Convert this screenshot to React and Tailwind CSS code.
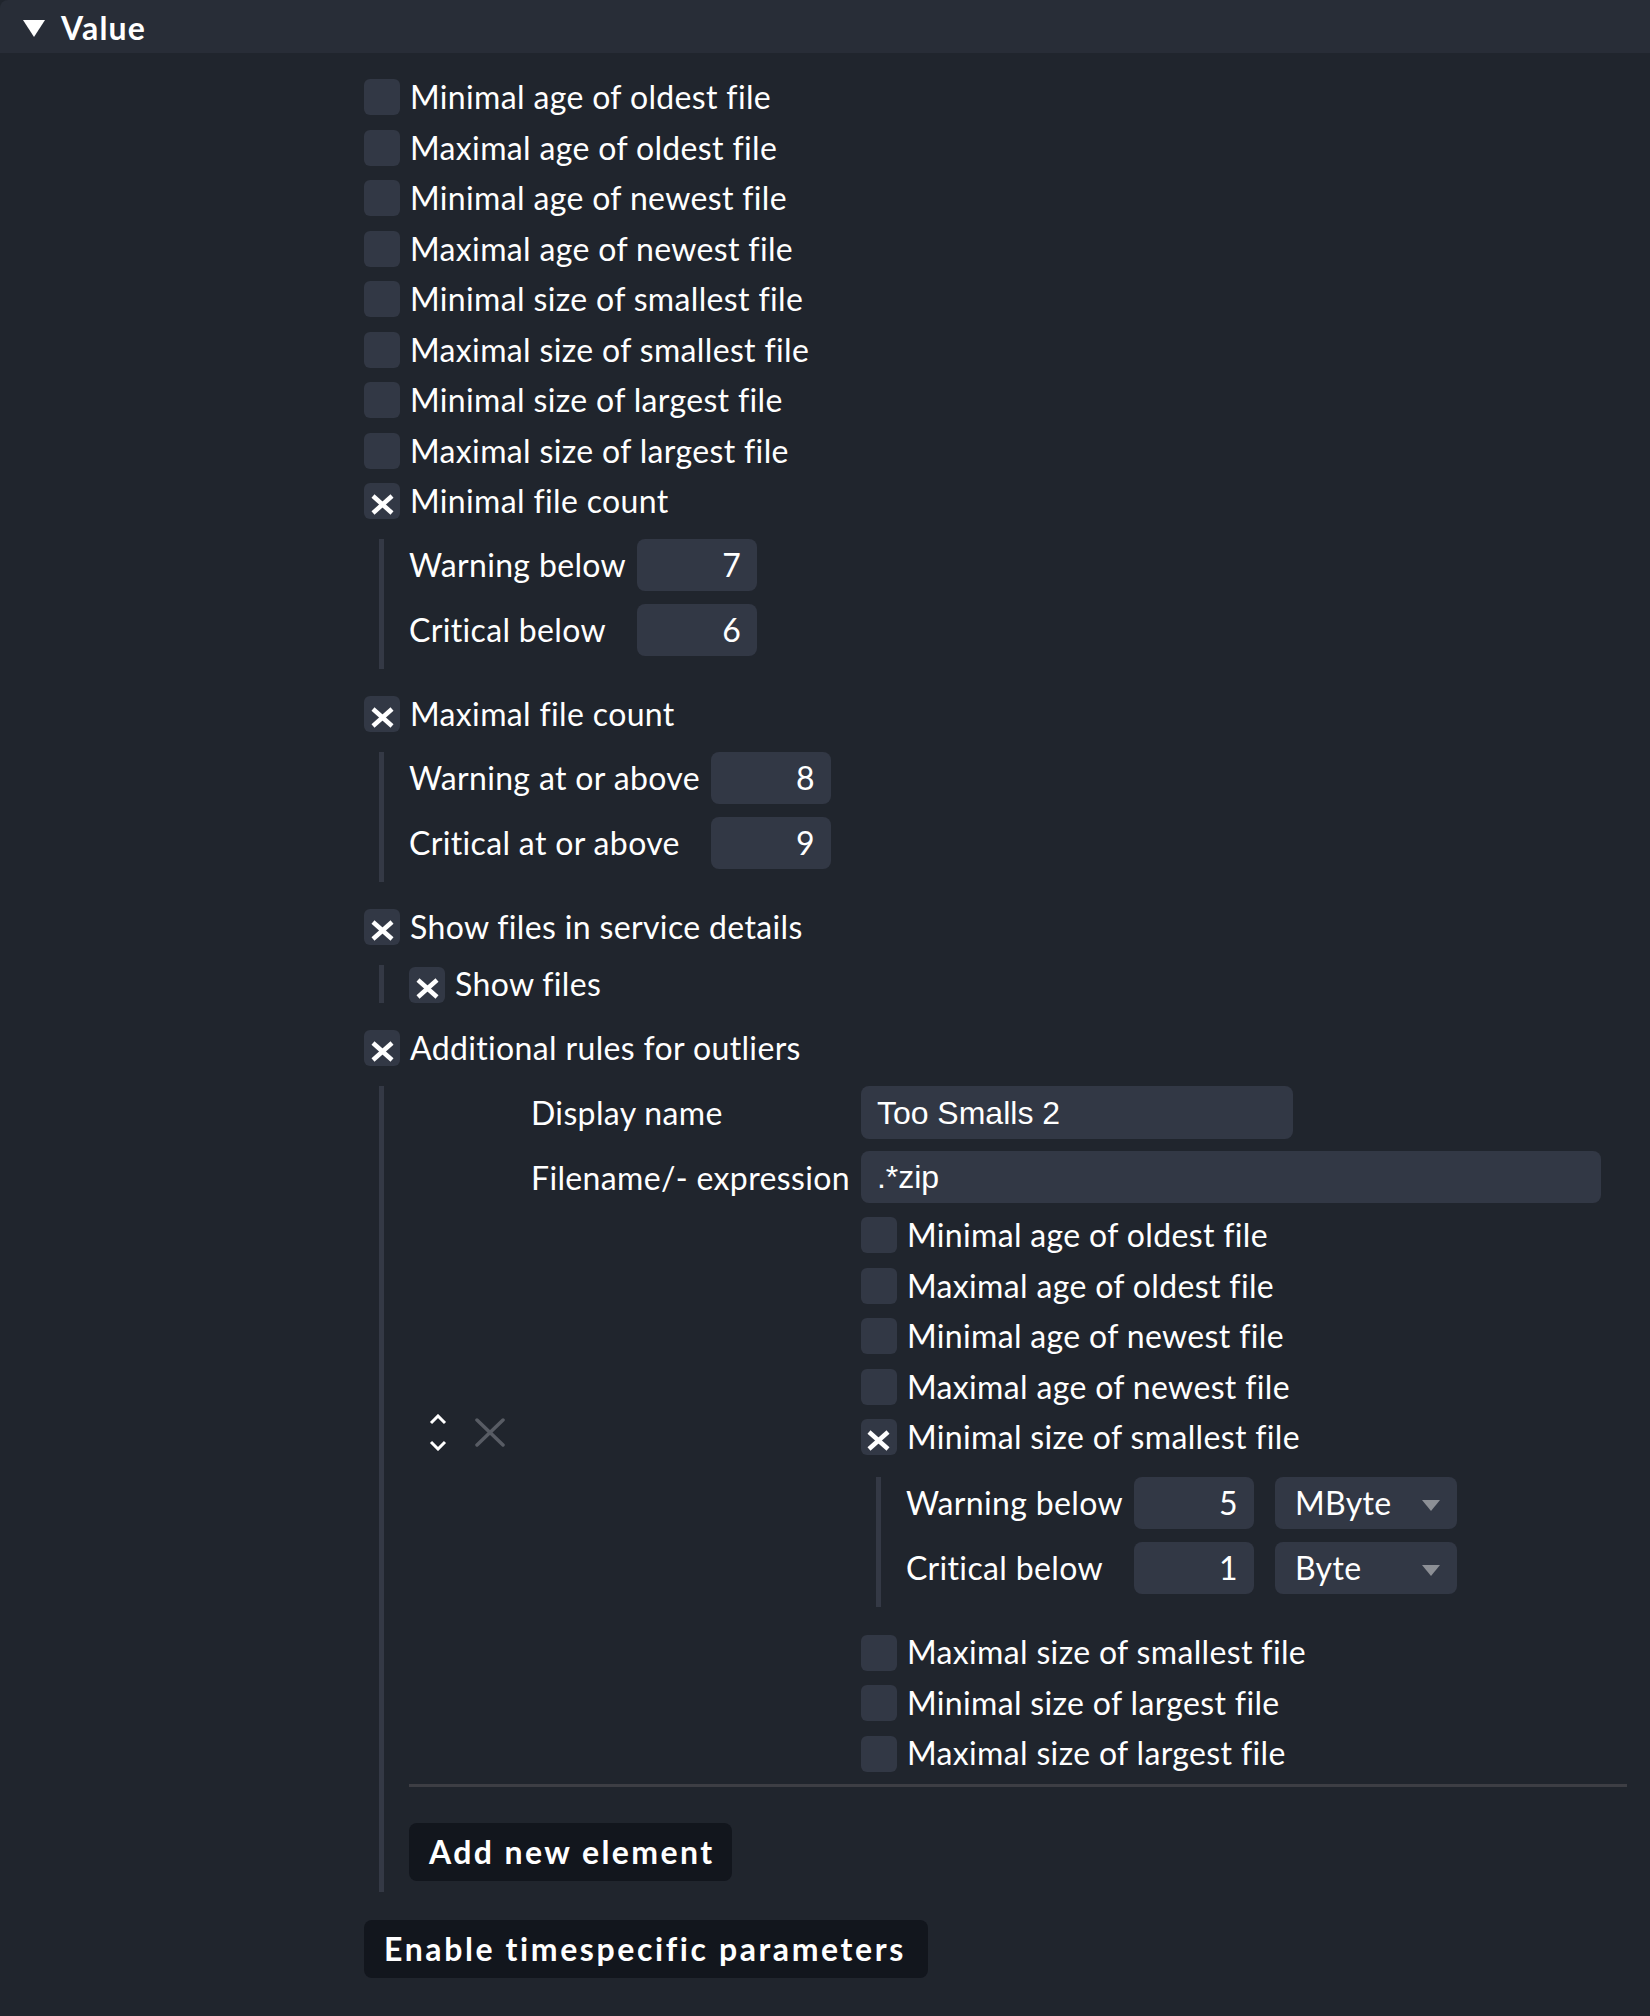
import React from "react";

function Check({ checked }) {
  return (
    <div className="w-[36px] h-[36px] shrink-0 rounded-[6px] bg-[#323845] flex items-center justify-center">
      {checked && (
        <svg width="23" height="21" viewBox="0 0 23 21" className="mt-[6px]">
          <line x1="2" y1="2" x2="21" y2="19" stroke="#ffffff" strokeWidth="4.5" />
          <line x1="21" y1="2" x2="2" y2="19" stroke="#ffffff" strokeWidth="4.5" />
        </svg>
      )}
    </div>
  );
}

function Row({ label, checked }) {
  return (
    <div className="flex items-center h-[50.5px]">
      <Check checked={checked} />
      <span className="ml-[10px] whitespace-nowrap">{label}</span>
    </div>
  );
}

function NumInput({ value }) {
  return (
    <div className="w-[120px] h-[52px] rounded-[8px] bg-[#323845] flex items-center justify-end pr-[16px]">
      {value}
    </div>
  );
}

function Select({ value }) {
  return (
    <div className="w-[182px] h-[52px] rounded-[8px] bg-[#323845] flex items-center justify-between pl-[20px] pr-[17px]">
      <span>{value}</span>
      <svg width="18" height="11" viewBox="0 0 18 11" className="mt-[4px]">
        <polygon points="0,0 18,0 9,11" fill="#8c8f95" />
      </svg>
    </div>
  );
}

function SubBlock({ children }) {
  return (
    <div className="mt-[12.75px] ml-[15px] border-l-[5px] border-[#343945] pl-[25px] pb-[13px]">
      <div className="grid grid-cols-[auto_auto] w-fit gap-x-[11px] gap-y-[13px]">{children}</div>
    </div>
  );
}

function Label({ children }) {
  return <div className="self-center whitespace-nowrap">{children}</div>;
}

export default function App() {
  return (
    <div className="w-[1650px] min-h-[2016px] bg-[#20252d] text-white text-[32px] tracking-[0.35px] font-['Lato',sans-serif] leading-[1.2]">
      <div className="h-[53px] bg-[#282d37] rounded-tl-[8px] flex items-center pl-[23px]">
        <svg width="22" height="17" viewBox="0 0 22 17" className="mt-[4px]">
          <polygon points="0,0 22,0 11,17" fill="#ffffff" />
        </svg>
        <span className="ml-[16px] mt-[4px] font-bold tracking-[1.2px]">Value</span>
      </div>

      <div className="pl-[364px] pt-[19px]">
        <Row label="Minimal age of oldest file" />
        <Row label="Maximal age of oldest file" />
        <Row label="Minimal age of newest file" />
        <Row label="Maximal age of newest file" />
        <Row label="Minimal size of smallest file" />
        <Row label="Maximal size of smallest file" />
        <Row label="Minimal size of largest file" />
        <Row label="Maximal size of largest file" />
        <Row label="Minimal file count" checked />
        <SubBlock>
          <Label>Warning below</Label>
          <NumInput value="7" />
          <Label>Critical below</Label>
          <NumInput value="6" />
        </SubBlock>

        <div className="mt-[19.75px]">
          <Row label="Maximal file count" checked />
        </div>
        <SubBlock>
          <Label>Warning at or above</Label>
          <NumInput value="8" />
          <Label>Critical at or above</Label>
          <NumInput value="9" />
        </SubBlock>

        <div className="mt-[19.75px]">
          <Row label="Show files in service details" checked />
        </div>
        <div className="mt-[12.75px] ml-[15px] border-l-[5px] border-[#343945] pl-[25px] h-[38px] flex items-end">
          <Check checked />
          <span className="ml-[10px]">Show files</span>
        </div>

        <div className="mt-[19.75px]">
          <Row label="Additional rules for outliers" checked />
        </div>

        <div className="mt-[12.75px] ml-[15px] mr-[23px] border-l-[5px] border-[#343945] pl-[25px] pb-[11px]">
          <div className="flex items-center border-b-[3px] border-[#3d3e44] pb-[5px]">
            <div className="w-[122px] shrink-0 flex items-center pl-[20px]">
              <svg width="18" height="37" viewBox="0 0 18 37">
                <polyline points="2,9 9,2 16,9" fill="none" stroke="#ffffff" strokeWidth="3" />
                <polyline points="2,28 9,35 16,28" fill="none" stroke="#ffffff" strokeWidth="3" />
              </svg>
              <svg width="30" height="29" viewBox="0 0 30 29" className="ml-[28px]">
                <line x1="2" y1="2" x2="28" y2="27" stroke="#585c64" strokeWidth="3.5" strokeLinecap="round" />
                <line x1="28" y1="2" x2="2" y2="27" stroke="#585c64" strokeWidth="3.5" strokeLinecap="round" />
              </svg>
            </div>
            <div className="flex-1 grid grid-cols-[auto_1fr] gap-x-[11px] gap-y-[12px]">
              <Label>Display name</Label>
              <div className="w-[432px] h-[53px] rounded-[8px] bg-[#323845] flex items-center pl-[16px] font-['Liberation_Sans',sans-serif] tracking-normal text-[32px]">
                Too Smalls 2
              </div>
              <div className="whitespace-nowrap pt-[8px]">Filename/- expression</div>
              <div>
                <div className="w-[740px] h-[52px] rounded-[8px] bg-[#323845] flex items-center pl-[16px] font-['Liberation_Sans',sans-serif] tracking-normal text-[32px]">
                  .*zip
                </div>
                <div className="mt-[6.75px]">
                  <Row label="Minimal age of oldest file" />
                  <Row label="Maximal age of oldest file" />
                  <Row label="Minimal age of newest file" />
                  <Row label="Maximal age of newest file" />
                  <Row label="Minimal size of smallest file" checked />
                  <div className="mt-[14.75px] ml-[15px] border-l-[5px] border-[#343945] pl-[25px] pb-[13px]">
                    <div className="grid grid-cols-[auto_auto] w-fit gap-x-[11px] gap-y-[13px]">
                      <Label>Warning below</Label>
                      <div className="flex gap-[21px]">
                        <NumInput value="5" />
                        <Select value="MByte" />
                      </div>
                      <Label>Critical below</Label>
                      <div className="flex gap-[21px]">
                        <NumInput value="1" />
                        <Select value="Byte" />
                      </div>
                    </div>
                  </div>
                  <div className="mt-[20px]">
                    <Row label="Maximal size of smallest file" />
                    <Row label="Minimal size of largest file" />
                    <Row label="Maximal size of largest file" />
                  </div>
                </div>
              </div>
            </div>
          </div>

          <div className="mt-[36px] w-[323px] h-[58px] rounded-[8px] bg-[#12161d] flex items-center pl-[20px] font-bold tracking-[2.4px] whitespace-nowrap">
            Add new element
          </div>
        </div>

        <div className="mt-[28px] w-[564px] h-[58px] rounded-[8px] bg-[#12161d] flex items-center pl-[20px] font-bold tracking-[2.6px] whitespace-nowrap">
          Enable timespecific parameters
        </div>
      </div>
    </div>
  );
}
